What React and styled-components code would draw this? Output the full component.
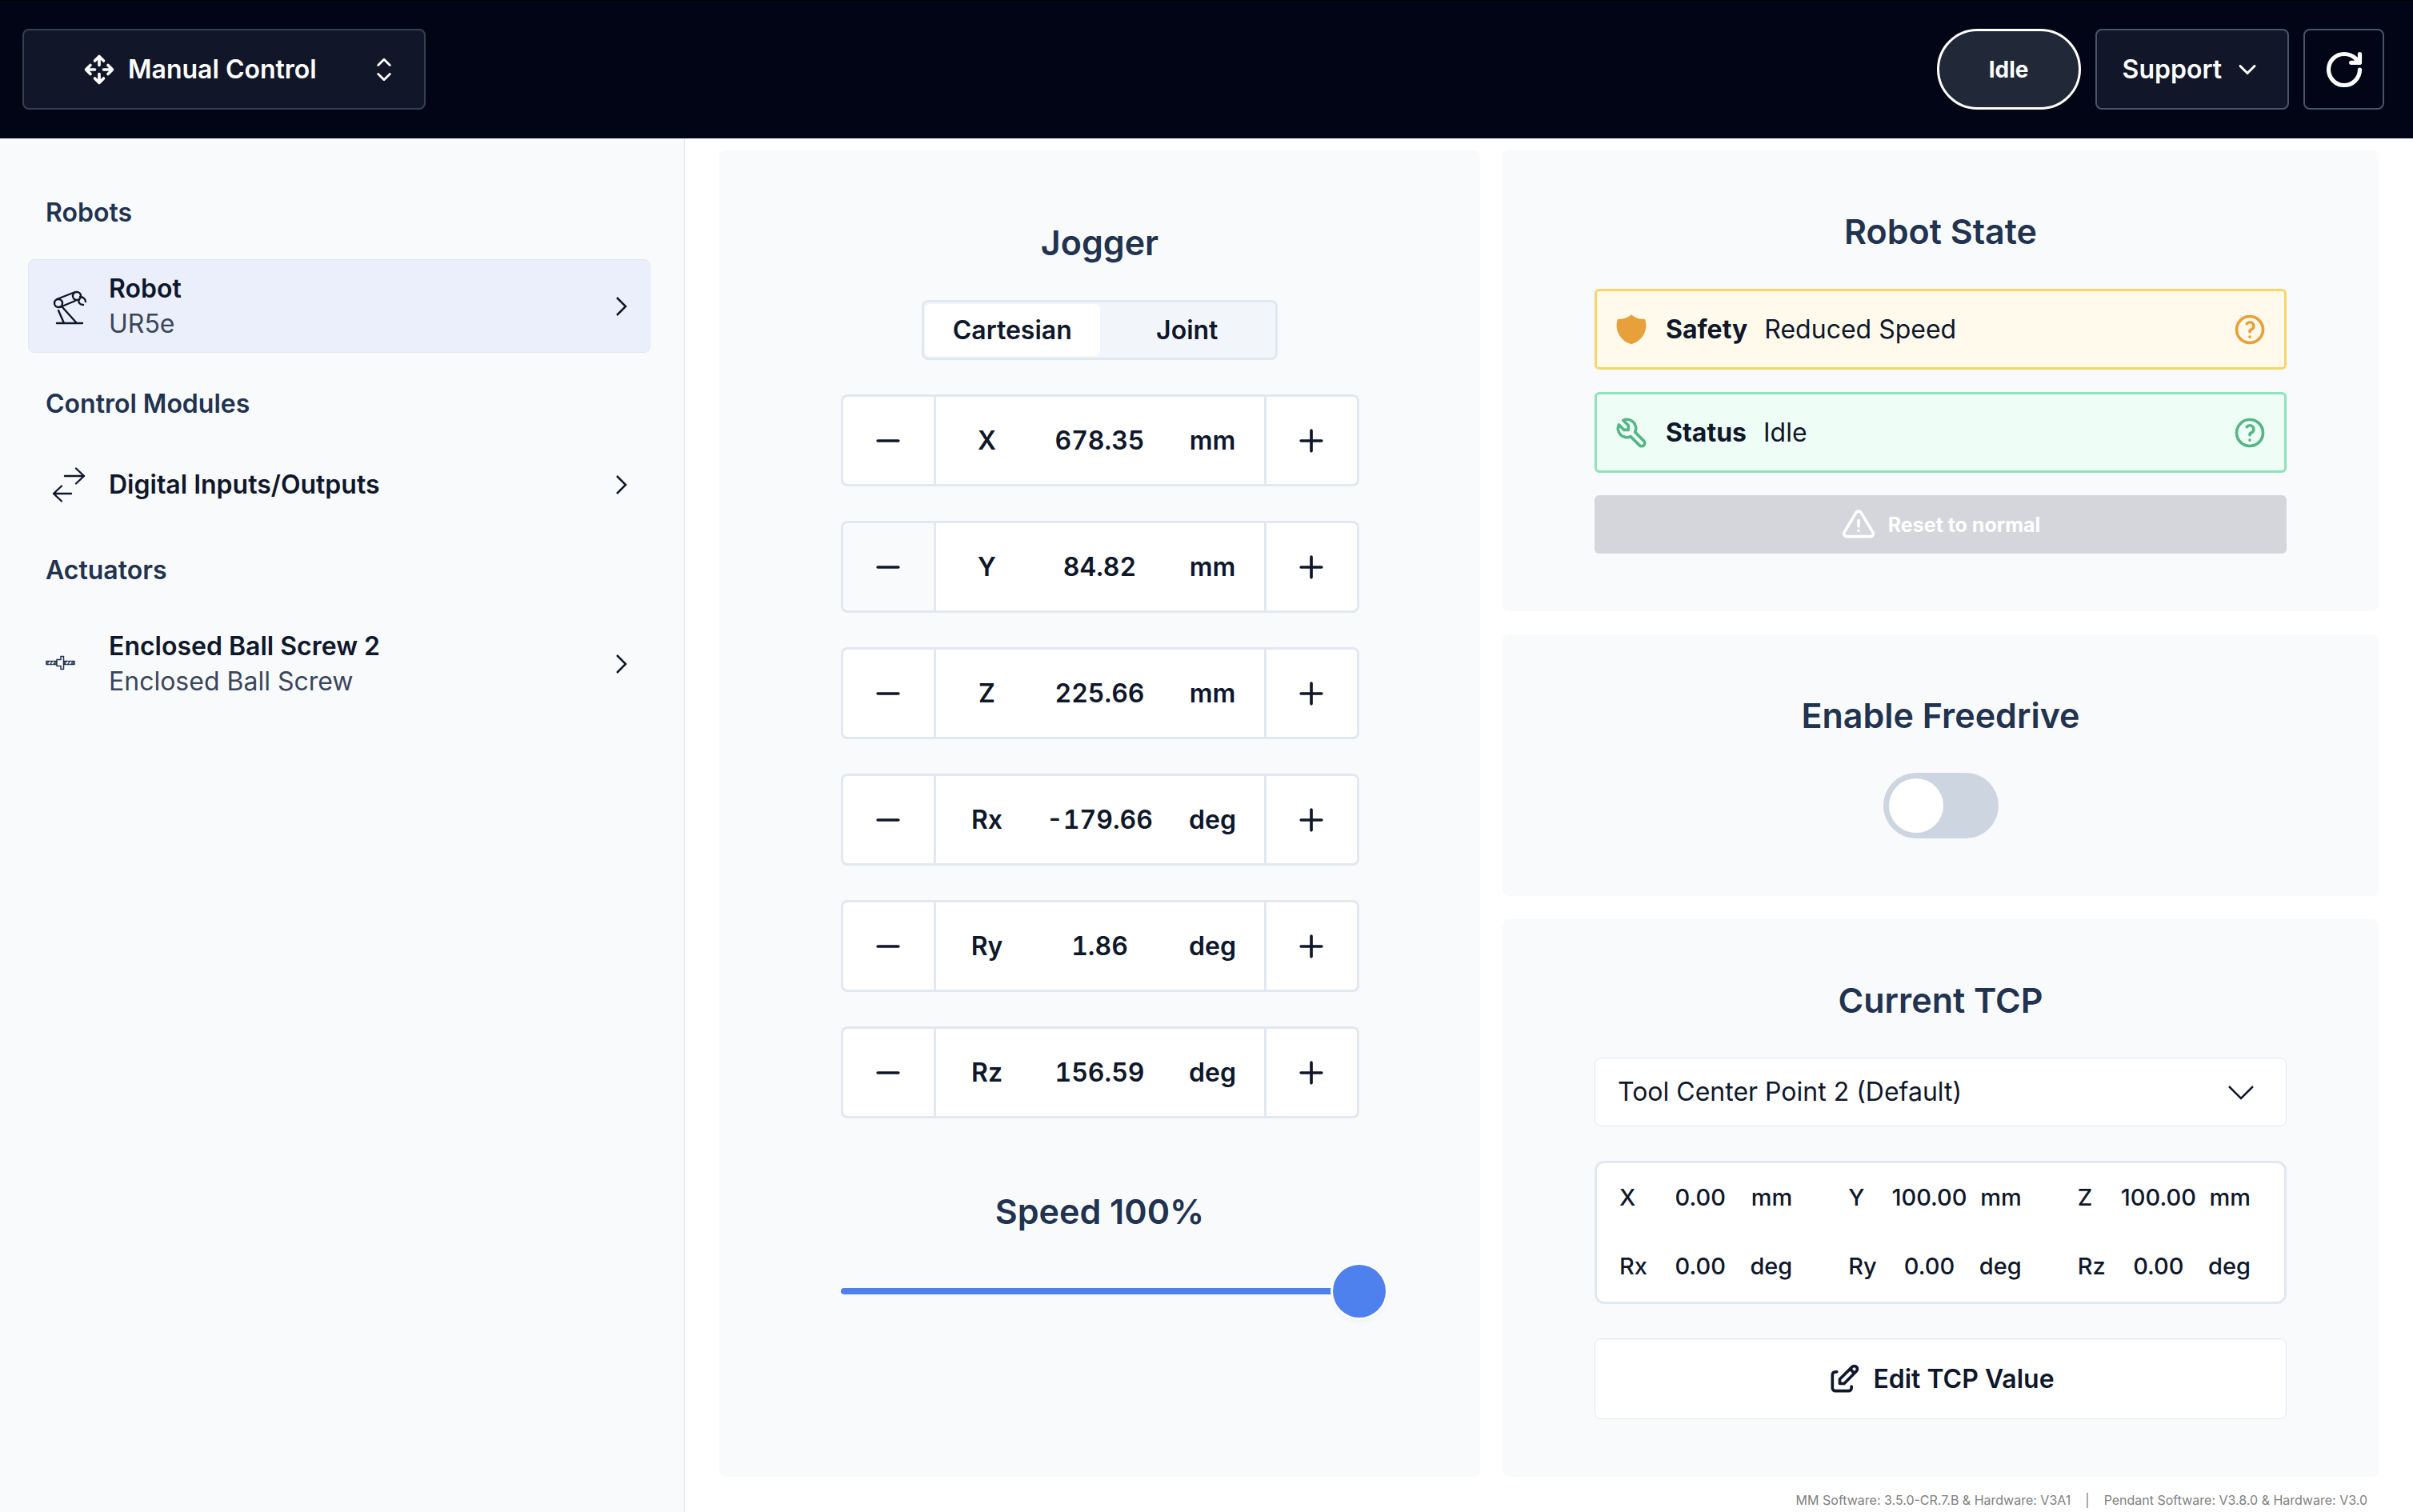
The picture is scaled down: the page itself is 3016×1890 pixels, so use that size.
import React, { useState } from 'react';
import styled, { createGlobalStyle } from 'styled-components';

const GlobalStyle = createGlobalStyle`
  * {
    box-sizing: border-box;
  }

  body {
    margin: 0;
    background-color: #ffffff;
    color: #0f172a;
    font-family: Inter, "Liberation Sans", sans-serif;
    font-size: 32px;
    line-height: 44px;
  }

  button, select, input {
    margin: 0;
    color: inherit;
    font: inherit;
  }

  button {
    cursor: pointer;
  }
`;

const Page = styled.div`
  display: flex;
  flex-direction: column;
  min-height: 100vh;
`;

const Header = styled.header`
  display: flex;
  align-items: center;
  gap: 18px;
  padding: 35px 36px 36px 28px;
  border-top: 1px solid #000000;
  background-color: #020515;
  color: #ffffff;
`;

const HeaderButton = styled.button`
  display: flex;
  align-items: center;
  justify-content: center;
  gap: 14px;
  height: 101px;
  padding: 0 32px;
  border: 2px solid ${(props) => (props.$mode ? '#334155' : '#475569')};
  border-radius: 8px;
  background-color: ${(props) => (props.$plain ? 'transparent' : '#111729')};
  font-weight: 600;
`;

const ModeButton = styled(HeaderButton)`
  width: 504px;
  padding: 0 28px 0 72px;
  margin-right: auto;

  span {
    flex: 1;
    text-align: left;
  }
`;

const SquareButton = styled(HeaderButton)`
  width: 101px;
  padding: 0;
`;

const StatusPill = styled.div`
  display: flex;
  align-items: center;
  justify-content: center;
  width: 180px;
  height: 101px;
  border: 3px solid #ffffff;
  border-radius: 51px;
  background-color: #212938;
  font-size: 28px;
  font-weight: 700;
`;

const Body = styled.div`
  display: flex;
  flex: 1;
`;

const Sidebar = styled.nav`
  width: 856px;
  padding: 71px 42px 0 35px;
  border-right: 1px solid #e2e8f0;
  background-color: #f9fafc;
`;

const SidebarTitle = styled.h2`
  margin: 0 0 36px 22px;
  color: #21334f;
  font-size: 32px;
  font-weight: 600;
  line-height: 44px;
`;

const SidebarItem = styled.button`
  display: flex;
  align-items: center;
  gap: 19px;
  width: 100%;
  height: ${(props) => (props.$short ? '86px' : '117px')};
  margin-bottom: 42px;
  padding: 0 18px 0 21px;
  border: 1px solid ${(props) => (props.$active ? '#e2e8f0' : 'transparent')};
  border-radius: 8px;
  background-color: ${(props) => (props.$active ? '#ebeffb' : 'transparent')};
  text-align: left;
`;

const ItemText = styled.span`
  display: flex;
  flex: 1;
  flex-direction: column;
`;

const ItemName = styled.span`
  font-weight: 600;
`;

const ItemDetail = styled.span`
  color: #3a475a;
`;

const Content = styled.div`
  display: flex;
  flex: 1;
  flex-direction: column;
  padding: 15px 43px 0;
`;

const Cards = styled.main`
  display: grid;
  grid-template-columns: 951fr 1095fr;
  gap: 28px;
`;

const CardColumn = styled.div`
  display: flex;
  flex-direction: column;
  gap: 29px;
`;

const Card = styled.section`
  display: flex;
  flex-direction: column;
  align-items: center;
  gap: 43px;
  padding: ${(props) => (props.$jogger ? '86px 116px 0' : '72px 115px')};
  border-radius: 8px;
  background-color: #f9fafc;
`;

const CardTitle = styled.h1`
  margin: 0;
  color: #21334f;
  font-size: 43px;
  font-weight: 600;
  line-height: 58px;
`;

const Segmented = styled.div`
  display: grid;
  grid-template-columns: 1fr 1fr;
  width: 445px;
  height: 75px;
  padding: 2px 1px;
  border: 3px solid #e2e8f0;
  border-radius: 8px;
  background-color: #f2f5fa;
`;

const Segment = styled.button`
  padding: 0;
  border: none;
  border-radius: 6px;
  background-color: ${(props) => (props.$active ? '#ffffff' : 'transparent')};
  font-weight: 600;
`;

const AxisRow = styled.div`
  display: flex;
  width: 648px;
  height: 115px;
`;

const StepButton = styled.button`
  display: flex;
  align-items: center;
  justify-content: center;
  width: 116px;
  padding: 0;
  border: 3px solid #e2e8f0;
  border-right-width: ${(props) => (props.$plus ? '3px' : '0')};
  border-left-width: ${(props) => (props.$plus ? '0' : '3px')};
  border-radius: ${(props) => (props.$plus ? '0 8px 8px 0' : '8px 0 0 8px')};
  background-color: ${(props) => (props.$pressed ? '#f9fafc' : '#ffffff')};
`;

const AxisValue = styled.div`
  display: grid;
  flex: 1;
  grid-template-columns: 1fr 154px 1fr;
  align-items: center;
  border: 3px solid #e2e8f0;
  background-color: #ffffff;
  font-weight: 600;
  font-variant-numeric: tabular-nums;
  text-align: center;
`;

const SpeedBox = styled.div`
  display: flex;
  flex-direction: column;
  align-items: center;
  gap: 38px;
  width: 648px;
  margin-top: 44px;
`;

const SpeedLabel = styled.label`
  color: #21334f;
  font-size: 43px;
  font-weight: 600;
  line-height: 58px;
`;

const SpeedSlider = styled.input`
  align-self: flex-start;
  width: calc(100% + 33px);
  height: 66px;
  background: transparent;
  appearance: none;

  &::-webkit-slider-runnable-track {
    height: 8px;
    border-radius: 4px;
    background-color: #4e80ee;
  }

  &::-webkit-slider-thumb {
    width: 66px;
    height: 66px;
    margin-top: -29px;
    border-radius: 50%;
    background-color: #4e80ee;
    box-shadow: 0 0 0 3px #fdfdfe, 0 4px 6px rgba(15, 23, 42, 0.06);
    appearance: none;
  }
`;

const StateList = styled.div`
  display: flex;
  flex-direction: column;
  gap: 28px;
  width: 100%;
`;

const StateRow = styled.div`
  display: flex;
  align-items: center;
  gap: 21px;
  height: 101px;
  padding: 0 21px;
  border: 3px solid ${(props) => (props.$ok ? '#8de3bb' : '#f8d568')};
  border-radius: 6px;
  background-color: ${(props) => (props.$ok ? '#eefdf6' : '#fffaeb')};
`;

const StateName = styled.strong`
  font-weight: 700;
`;

const IconButton = styled.button`
  display: flex;
  margin-left: auto;
  padding: 0;
  border: none;
  background: none;
`;

const ResetButton = styled.button`
  display: flex;
  align-items: center;
  justify-content: center;
  gap: 15px;
  height: 73px;
  border: none;
  border-radius: 6px;
  background-color: #d5d6dc;
  color: #ffffff;
  font-size: 25px;
  font-weight: 700;
`;

const Toggle = styled.input`
  display: flex;
  width: 144px;
  height: 82px;
  padding: 7px;
  border-radius: 41px;
  background-color: ${(props) => (props.checked ? '#4e80ee' : '#cdd5e1')};
  appearance: none;

  &::before {
    width: 68px;
    height: 68px;
    margin-left: ${(props) => (props.checked ? 'auto' : '0')};
    border-radius: 50%;
    background-color: #ffffff;
    content: '';
  }
`;

const SelectBox = styled.div`
  position: relative;
  width: 100%;

  svg {
    position: absolute;
    top: 21px;
    right: 36px;
    pointer-events: none;
  }
`;

const Select = styled.select`
  display: block;
  width: 100%;
  height: 86px;
  padding: 0 28px;
  border: 1px solid #e2e8f0;
  border-radius: 8px;
  background-color: #ffffff;
  appearance: none;
`;

const TcpValues = styled.div`
  display: grid;
  grid-template-columns: repeat(3, 1fr);
  width: 100%;
  padding-bottom: 1px;
  border: 3px solid #e2e8f0;
  border-radius: 12px;
  background-color: #ffffff;
`;

const TcpCell = styled.div`
  display: grid;
  grid-template-columns: 48px 1fr 62px;
  align-items: center;
  height: 86px;
  padding: 0 42px 0 28px;
  font-size: 29px;
  font-weight: 500;

  span:nth-child(2) {
    text-align: center;
  }

  span:last-child {
    text-align: right;
  }
`;

const EditButton = styled.button`
  display: flex;
  align-items: center;
  justify-content: center;
  gap: 14px;
  width: 100%;
  height: 101px;
  border: 1px solid #e2e8f0;
  border-radius: 8px;
  background-color: #ffffff;
  font-weight: 600;
`;

const Footer = styled.footer`
  display: flex;
  justify-content: flex-end;
  gap: 18px;
  padding: 15px 14px 0;
  color: #808080;
  font-size: 16px;
  line-height: 28px;
`;

const Icon = ({ size = 44, stroke = 2, color = 'currentColor', children }) => (
  <svg
    width={size}
    height={size}
    viewBox="0 0 24 24"
    fill="none"
    stroke={color}
    strokeWidth={stroke}
    strokeLinecap="round"
    strokeLinejoin="round"
    aria-hidden="true"
  >
    {children}
  </svg>
);

const MoveIcon = () => (
  <Icon>
    <path d="M18 9l3 3l-3 3M15 12h6M6 9l-3 3l3 3M3 12h6M9 18l3 3l3-3M12 15v6M15 6l-3-3l-3 3M12 3v6" />
  </Icon>
);

const HelpIcon = ({ color }) => (
  <Icon color={color}>
    <circle cx="12" cy="12" r="9" />
    <path d="M12 17v.01M12 13.5a1.5 1.5 0 0 1 1-1.5a2.6 2.6 0 1 0-3-4" />
  </Icon>
);

const ShieldIcon = () => (
  <svg width="44" height="44" viewBox="0 0 24 24" fill="#e8a03a" aria-hidden="true">
    <path d="M11.3 2.3a1 1 0 0 1 1.4 0a11 11 0 0 0 7.4 2.5l.3 0a1 1 0 0 1 1.1.7a13 13 0 0 1-9.2 16.3a1 1 0 0 1-.6 0a13 13 0 0 1-9.2-16.3a1 1 0 0 1 1.1-.7a11 11 0 0 0 7.7-2.5z" />
  </svg>
);

const ArmIcon = () => (
  <svg width="60" height="60" viewBox="0 0 60 60" fill="none" stroke="#0f172a" strokeWidth="2.400" strokeLinecap="round" aria-hidden="true">
    <circle cx="16" cy="26" r="5" />
    <circle cx="39" cy="17" r="5" />
    <path d="M14 21L37 12M18 31L37 23M16 35L23 51M21 31L39 51M14 51H46" />
    <path d="M43 18C47 18 50 21 50 24M42 21C40 25 43 28 47 28" />
  </svg>
);

const InOutIcon = () => (
  <svg width="60" height="60" viewBox="0 0 60 60" fill="none" stroke="#0f172a" strokeWidth="2.400" strokeLinecap="round" strokeLinejoin="round" aria-hidden="true">
    <path d="M24 19H48M38 9.500L48 19L38 28.500M32 41H10M20 31.500L10 41L20 50.500" />
  </svg>
);

const ScrewIcon = () => (
  <svg width="60" height="60" viewBox="0 0 60 60" fill="none" stroke="#21334f" strokeWidth="1.500" strokeLinejoin="round" aria-hidden="true">
    <path d="M1 26.500H14V30.500H1ZM23 26.500H36V30.500H23Z" fill="#5b687c" />
    <path d="M4 30L6 27M8 30L10 27M26 30L28 27M30 30L32 27" stroke="#ffffff" />
    <path d="M14 24.500H19V20.500H22.500V36.500H19V32.500H14Z" fill="#f9fafc" />
  </svg>
);

const ChevronRight = () => (
  <svg width="36" height="36" viewBox="0 0 36 36" fill="none" stroke="#0f172a" strokeWidth="2.500" aria-hidden="true">
    <path d="M13 7L24 18L13 29" />
  </svg>
);

const ChevronDown = () => (
  <svg width="44" height="44" viewBox="0 0 44 44" fill="none" stroke="#0f172a" strokeWidth="2.500" aria-hidden="true">
    <path d="M8 15L23 30L38 15" />
  </svg>
);

const AXES = [
  { name: 'X', value: 678.35, unit: 'mm' },
  { name: 'Y', value: 84.82, unit: 'mm', pressed: true },
  { name: 'Z', value: 225.66, unit: 'mm' },
  { name: 'Rx', value: -179.66, unit: 'deg' },
  { name: 'Ry', value: 1.86, unit: 'deg' },
  { name: 'Rz', value: 156.59, unit: 'deg' },
];

const TCP = [
  { name: 'X', value: '0.00', unit: 'mm' },
  { name: 'Y', value: '100.00', unit: 'mm' },
  { name: 'Z', value: '100.00', unit: 'mm' },
  { name: 'Rx', value: '0.00', unit: 'deg' },
  { name: 'Ry', value: '0.00', unit: 'deg' },
  { name: 'Rz', value: '0.00', unit: 'deg' },
];

const App = () => {
  const [axes, setAxes] = useState(AXES);
  const [mode, setMode] = useState('Cartesian');
  const [speed, setSpeed] = useState(100);
  const [freedrive, setFreedrive] = useState(false);

  const jog = (name, step) => {
    setAxes((prev) =>
      prev.map((axis) => (axis.name === name ? { ...axis, value: axis.value + step } : axis))
    );
  };

  return (
    <>
      <GlobalStyle />
      <Page>
        <Header>
          <ModeButton $mode>
            <MoveIcon />
            <span>Manual Control</span>
            <Icon stroke={1.5}>
              <path d="M8 9l4-4l4 4M16 15l-4 4l-4-4" />
            </Icon>
          </ModeButton>
          <StatusPill>Idle</StatusPill>
          <HeaderButton>
            Support
            <Icon size={36}>
              <path d="M6 9l6 6l6-6" />
            </Icon>
          </HeaderButton>
          <SquareButton $plain aria-label="Refresh">
            <Icon size={52} stroke={2.4}>
              <path d="M21 12a9 9 0 1 1-9-9c2.520 0 4.930 1 6.740 2.740L21 8M21 3v5h-5" />
            </Icon>
          </SquareButton>
        </Header>

        <Body>
          <Sidebar>
            <SidebarTitle>Robots</SidebarTitle>
            <SidebarItem $active>
              <ArmIcon />
              <ItemText>
                <ItemName>Robot</ItemName>
                <ItemDetail>UR5e</ItemDetail>
              </ItemText>
              <ChevronRight />
            </SidebarItem>
            <SidebarTitle>Control Modules</SidebarTitle>
            <SidebarItem $short>
              <InOutIcon />
              <ItemText>
                <ItemName>Digital Inputs/Outputs</ItemName>
              </ItemText>
              <ChevronRight />
            </SidebarItem>
            <SidebarTitle>Actuators</SidebarTitle>
            <SidebarItem>
              <ScrewIcon />
              <ItemText>
                <ItemName>Enclosed Ball Screw 2</ItemName>
                <ItemDetail>Enclosed Ball Screw</ItemDetail>
              </ItemText>
              <ChevronRight />
            </SidebarItem>
          </Sidebar>

          <Content>
            <Cards>
              <Card $jogger>
                <CardTitle>Jogger</CardTitle>
                <Segmented>
                  {['Cartesian', 'Joint'].map((name) => (
                    <Segment
                      key={name}
                      $active={mode === name}
                      aria-pressed={mode === name}
                      onClick={() => setMode(name)}
                    >
                      {name}
                    </Segment>
                  ))}
                </Segmented>
                {axes.map((axis) => (
                  <AxisRow key={axis.name}>
                    <StepButton
                      $pressed={axis.pressed}
                      aria-label={`Decrease ${axis.name}`}
                      onClick={() => jog(axis.name, -1)}
                    >
                      <Icon>
                        <path d="M5 12h14" />
                      </Icon>
                    </StepButton>
                    <AxisValue>
                      <span>{axis.name}</span>
                      <span>{axis.value.toFixed(2)}</span>
                      <span>{axis.unit}</span>
                    </AxisValue>
                    <StepButton
                      $plus
                      aria-label={`Increase ${axis.name}`}
                      onClick={() => jog(axis.name, 1)}
                    >
                      <Icon>
                        <path d="M5 12h14M12 5v14" />
                      </Icon>
                    </StepButton>
                  </AxisRow>
                ))}
                <SpeedBox>
                  <SpeedLabel htmlFor="speed">Speed {speed}%</SpeedLabel>
                  <SpeedSlider
                    id="speed"
                    type="range"
                    min="0"
                    max="100"
                    value={speed}
                    onChange={(e) => setSpeed(e.target.value)}
                  />
                </SpeedBox>
              </Card>

              <CardColumn>
                <Card>
                  <CardTitle>Robot State</CardTitle>
                  <StateList>
                    <StateRow>
                      <ShieldIcon />
                      <StateName>Safety</StateName>
                      <span>Reduced Speed</span>
                      <IconButton aria-label="Safety help">
                        <HelpIcon color="#e8a03a" />
                      </IconButton>
                    </StateRow>
                    <StateRow $ok>
                      <Icon color="#56b686">
                        <path d="M7 10h3v-3l-3.500-3.500a6 6 0 0 1 8 8l6 6a2 2 0 0 1-3 3l-6-6a6 6 0 0 1-8-8l3.500 3.500" />
                      </Icon>
                      <StateName>Status</StateName>
                      <span>Idle</span>
                      <IconButton aria-label="Status help">
                        <HelpIcon color="#56b686" />
                      </IconButton>
                    </StateRow>
                    <ResetButton disabled>
                      <Icon>
                        <path d="M12 9v4M12 16h.01M10.363 3.591l-8.106 13.534a1.914 1.914 0 0 0 1.636 2.871h16.214a1.914 1.914 0 0 0 1.636-2.870l-8.106-13.536a1.914 1.914 0 0 0-3.274 0z" />
                      </Icon>
                      Reset to normal
                    </ResetButton>
                  </StateList>
                </Card>

                <Card>
                  <CardTitle as="label" htmlFor="freedrive">Enable Freedrive</CardTitle>
                  <Toggle
                    id="freedrive"
                    type="checkbox"
                    checked={freedrive}
                    onChange={(e) => setFreedrive(e.target.checked)}
                  />
                </Card>

                <Card>
                  <CardTitle as="label" htmlFor="tcp">Current TCP</CardTitle>
                  <SelectBox>
                    <Select id="tcp">
                      <option>Tool Center Point 2 (Default)</option>
                    </Select>
                    <ChevronDown />
                  </SelectBox>
                  <TcpValues>
                    {TCP.map((item) => (
                      <TcpCell key={item.name}>
                        <span>{item.name}</span>
                        <span>{item.value}</span>
                        <span>{item.unit}</span>
                      </TcpCell>
                    ))}
                  </TcpValues>
                  <EditButton>
                    <Icon>
                      <path d="M7 7h-1a2 2 0 0 0-2 2v9a2 2 0 0 0 2 2h9a2 2 0 0 0 2-2v-1M20.385 6.585a2.100 2.100 0 0 0-2.970-2.970l-8.415 8.385v3h3l8.385-8.415zM16 5l3 3" />
                    </Icon>
                    Edit TCP Value
                  </EditButton>
                </Card>
              </CardColumn>
            </Cards>
            <Footer>
              <span>MM Software: 3.5.0-CR.7.B &amp; Hardware: V3A1</span>
              <span>|</span>
              <span>Pendant Software: V3.8.0 &amp; Hardware: V3.0</span>
            </Footer>
          </Content>
        </Body>
      </Page>
    </>
  );
};

export default App;
